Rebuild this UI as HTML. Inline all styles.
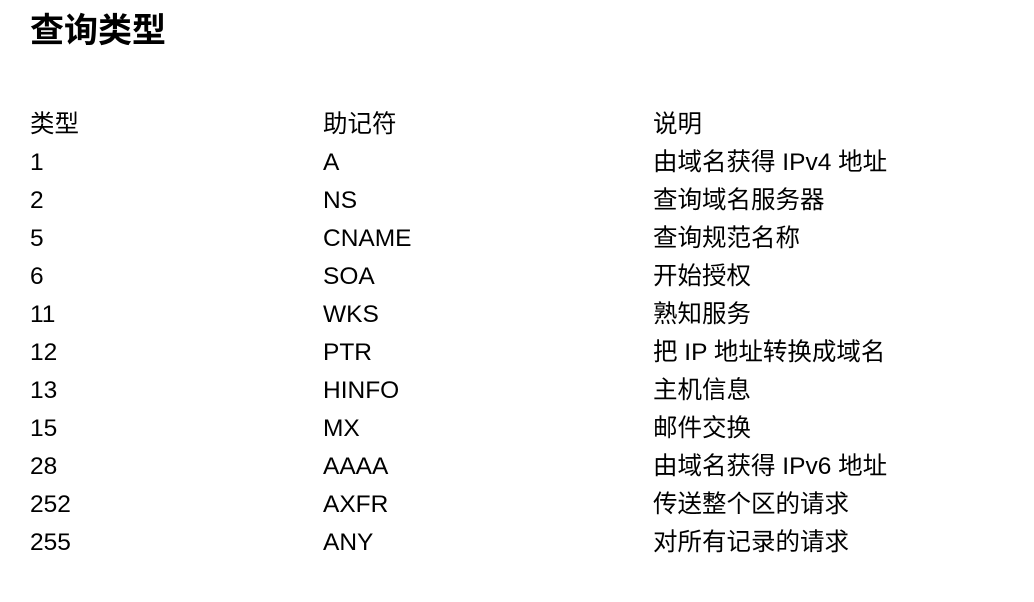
<!DOCTYPE html>
<html><head><meta charset="utf-8"><style>
body{margin:0;width:1034px;height:602px;background:#fff;position:relative;overflow:hidden;font-family:"Liberation Sans","Noto Sans CJK SC",sans-serif;color:#000}
h1{position:absolute;left:30px;top:8px;margin:0;font-size:34px;line-height:46px;font-weight:bold}
.r{position:absolute;left:0;height:38px;line-height:38px;font-size:24.5px;width:1034px}
.r span{position:absolute;top:2px}
.a{left:30px}.b{left:323px}.c{left:653px}
</style></head><body>
<h1>查询类型</h1>
<div class="r" style="top:104px"><span class="a">类型</span><span class="b">助记符</span><span class="c">说明</span></div>
<div class="r" style="top:142px"><span class="a">1</span><span class="b">A</span><span class="c">由域名获得 IPv4 地址</span></div>
<div class="r" style="top:180px"><span class="a">2</span><span class="b">NS</span><span class="c">查询域名服务器</span></div>
<div class="r" style="top:218px"><span class="a">5</span><span class="b">CNAME</span><span class="c">查询规范名称</span></div>
<div class="r" style="top:256px"><span class="a">6</span><span class="b">SOA</span><span class="c">开始授权</span></div>
<div class="r" style="top:294px"><span class="a">11</span><span class="b">WKS</span><span class="c">熟知服务</span></div>
<div class="r" style="top:332px"><span class="a">12</span><span class="b">PTR</span><span class="c">把 IP 地址转换成域名</span></div>
<div class="r" style="top:370px"><span class="a">13</span><span class="b">HINFO</span><span class="c">主机信息</span></div>
<div class="r" style="top:408px"><span class="a">15</span><span class="b">MX</span><span class="c">邮件交换</span></div>
<div class="r" style="top:446px"><span class="a">28</span><span class="b">AAAA</span><span class="c">由域名获得 IPv6 地址</span></div>
<div class="r" style="top:484px"><span class="a">252</span><span class="b">AXFR</span><span class="c">传送整个区的请求</span></div>
<div class="r" style="top:522px"><span class="a">255</span><span class="b">ANY</span><span class="c">对所有记录的请求</span></div>
</body></html>
